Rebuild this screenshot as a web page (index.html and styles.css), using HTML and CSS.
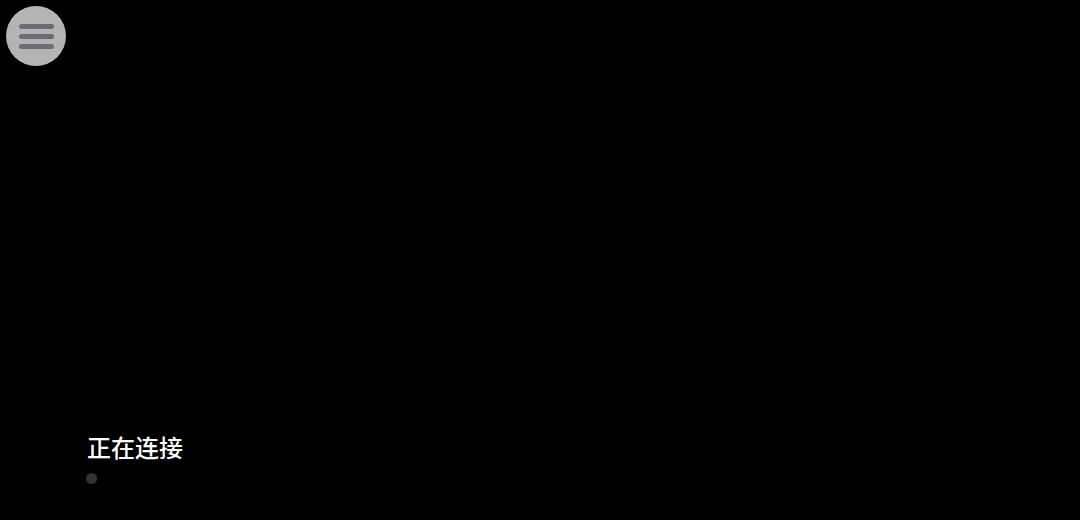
FILE: index.html
```html
<!DOCTYPE html>
<html lang="zh-CN">
<head>
    <meta charset="UTF-8">
    <meta name="viewport" content="width=device-width, initial-scale=1.0">
    <title>正在连接</title>
    <link rel="stylesheet" href="styles.css">
</head>
<body>
    <div class="screen">
        <!-- Menu button -->
        <button class="menu-btn" type="button">
            <span class="bar"></span>
            <span class="bar"></span>
            <span class="bar"></span>
        </button>

        <!-- Connection status -->
        <div class="status">
            <div class="status-text">正在连接</div>
            <div class="dots">
                <span class="dot"></span>
            </div>
        </div>
    </div>
</body>
</html>
```

FILE: styles.css
```css
html, body {
    margin: 0;
    padding: 0;
    background-color: #000;
}
body {
    font-family: "Noto Sans CJK SC", "Noto Sans", sans-serif;
    width: 1080px;
    height: 520px;
    overflow: hidden;
}
.screen {
    height: 520px;
    display: flex;
    flex-direction: column;
    justify-content: space-between;
    box-sizing: border-box;
    padding: 6px 0 36px 6px;
}
.menu-btn {
    width: 60px;
    height: 60px;
    border-radius: 50%;
    border: none;
    padding: 0;
    background-color: #b4b4b4;
    display: flex;
    flex-direction: column;
    align-items: center;
    justify-content: center;
    gap: 5px;
    cursor: pointer;
}
.menu-btn .bar {
    display: block;
    width: 35px;
    height: 5px;
    border-radius: 3px;
    background-color: #6c6c74;
}
.status {
    padding-left: 81px;
}
.status-text {
    color: #fff;
    font-size: 24px;
    font-weight: 500;
    line-height: 28px;
}
.dots {
    display: flex;
    margin-top: 12px;
}
.dot {
    width: 11px;
    height: 11px;
    margin-left: -1px;
    border-radius: 50%;
    background-color: #333;
}
```
